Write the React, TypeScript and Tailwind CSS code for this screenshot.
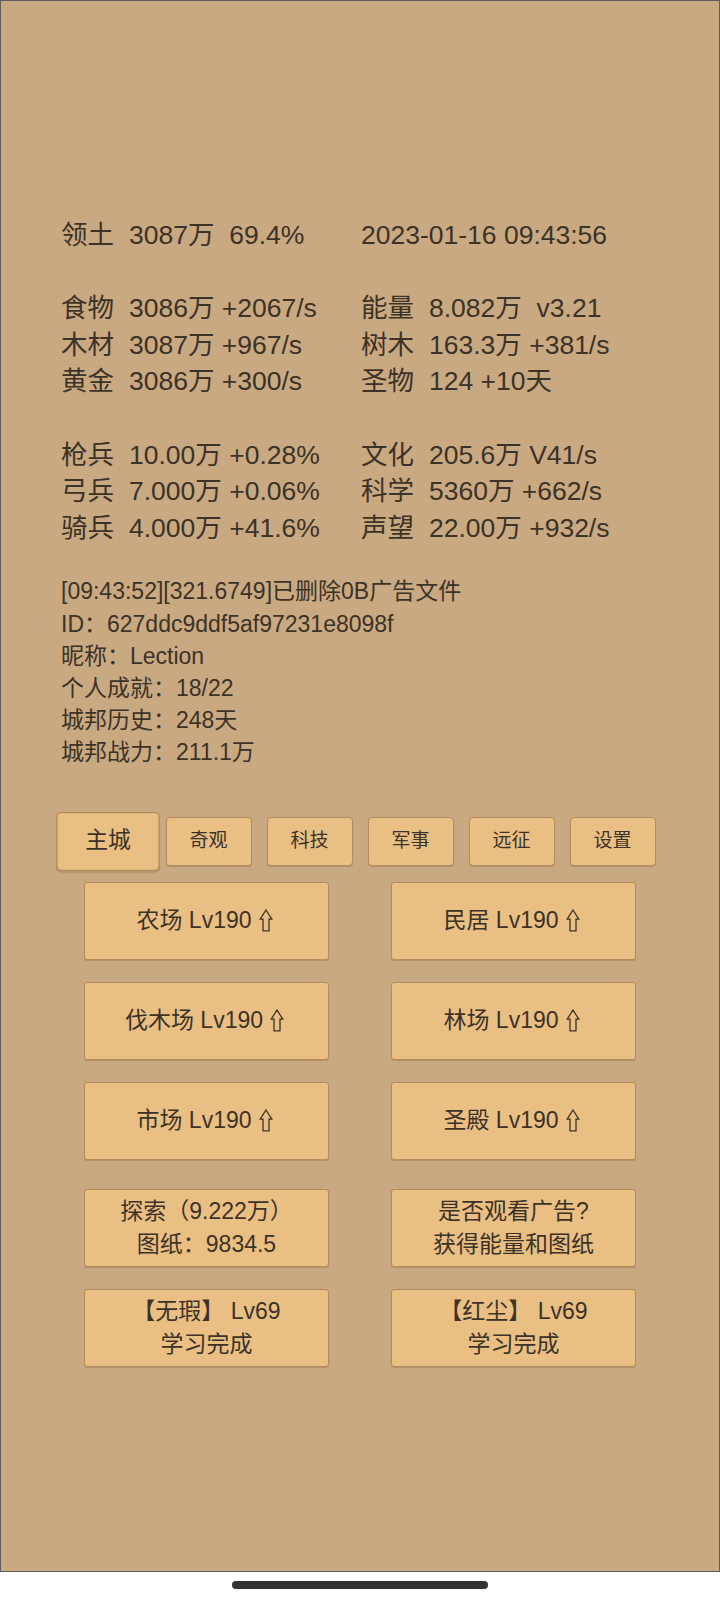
import React from 'react';

const font = { fontFamily: '"Liberation Sans", "Noto Sans CJK SC", sans-serif' };

type Stat = { label: string; value: string };

const statRows: (null | [Stat, Stat])[] = [
    [
        { label: '领土', value: '3087万  69.4%' },
        { label: '', value: '2023-01-16 09:43:56' },
    ],
    null,
    [
        { label: '食物', value: '3086万 +2067/s' },
        { label: '能量', value: '8.082万  v3.21' },
    ],
    [
        { label: '木材', value: '3087万 +967/s' },
        { label: '树木', value: '163.3万 +381/s' },
    ],
    [
        { label: '黄金', value: '3086万 +300/s' },
        { label: '圣物', value: '124 +10天' },
    ],
    null,
    [
        { label: '枪兵', value: '10.00万 +0.28%' },
        { label: '文化', value: '205.6万 V41/s' },
    ],
    [
        { label: '弓兵', value: '7.000万 +0.06%' },
        { label: '科学', value: '5360万 +662/s' },
    ],
    [
        { label: '骑兵', value: '4.000万 +41.6%' },
        { label: '声望', value: '22.00万 +932/s' },
    ],
];

const infoLines = [
    '[09:43:52][321.6749]已删除0B广告文件',
    'ID：627ddc9ddf5af97231e8098f',
    '昵称：Lection',
    '个人成就：18/22',
    '城邦历史：248天',
    '城邦战力：211.1万',
];

const tabs = ['主城', '奇观', '科技', '军事', '远征', '设置'];

const buildings = [
    ['农场', '民居'],
    ['伐木场', '林场'],
    ['市场', '圣殿'],
];

function UpArrow() {
    return (
        <svg width="14" height="23" viewBox="0 0 14 23" className="ml-[7px] shrink-0">
            <path
                d="M7 1 L12.8 10.2 H10 V21.8 H4 V10.2 H1.2 Z"
                fill="none"
                stroke="#3d3226"
                strokeWidth="1.3"
                strokeLinejoin="miter"
            />
        </svg>
    );
}

function StatCell({ stat }: { stat: Stat }) {
    return (
        <div className="flex w-[300px] whitespace-pre">
            {stat.label && <span className="w-[68px] shrink-0">{stat.label}</span>}
            <span>{stat.value}</span>
        </div>
    );
}

function GameButton({ children }: { children: React.ReactNode }) {
    return (
        <button className="flex h-[78px] w-[245px] flex-col items-center justify-center rounded-[3px] border border-[#b48b5d] bg-[#e9bf84] text-[23px] leading-[33px] text-[#3d3226] shadow-[0_1px_1px_rgba(80,50,20,0.2)]">
            {children}
        </button>
    );
}

export default function App() {
    return (
        <div className="h-[1601px] w-[720px] bg-white text-[#3d3226]" style={font}>
            {/* Game panel */}
            <div className="flex h-[1572px] w-[720px] flex-col border border-[#5e5e5e] bg-[#c9a981] pt-[216px]">
                {/* Resource stats */}
                <div className="flex flex-col pl-[60px] text-[26.5px] leading-[36.6px]">
                    {statRows.map((row, i) =>
                        row ? (
                            <div key={i} className="flex">
                                <StatCell stat={row[0]} />
                                <StatCell stat={row[1]} />
                            </div>
                        ) : (
                            <div key={i} className="h-[36.6px]" />
                        )
                    )}
                </div>

                {/* Log + player info */}
                <div className="mt-[29px] flex flex-col pl-[60px] text-[23px] leading-[32.2px]">
                    {infoLines.map((line) => (
                        <div key={line}>{line}</div>
                    ))}
                </div>

                {/* Tabs */}
                <div className="mt-[48px] flex justify-center gap-[15px]">
                    {tabs.map((t, i) => (
                        <button
                            key={t}
                            className={
                                i === 0
                                    ? 'flex h-[49px] w-[86px] scale-[1.2] items-center justify-center rounded-[4px] border border-[#b48b5d] bg-[#e9bf84] text-[19px] text-[#3d3226] shadow-[0_1px_1px_rgba(80,50,20,0.15)]'
                                    : 'flex h-[49px] w-[86px] items-center justify-center rounded-[4px] border border-[#b48b5d] bg-[#e9bf84] text-[19px] text-[#3d3226] shadow-[0_1px_1px_rgba(80,50,20,0.2)]'
                            }
                        >
                            {t}
                        </button>
                    ))}
                </div>

                {/* Buildings */}
                <div className="mt-[16px] flex flex-col gap-[22px]">
                    {buildings.map((pair) => (
                        <div key={pair[0]} className="flex justify-center gap-[62px]">
                            {pair.map((b) => (
                                <GameButton key={b}>
                                    <span className="flex items-center pr-[4px]">
                                        {b} Lv190
                                        <UpArrow />
                                    </span>
                                </GameButton>
                            ))}
                        </div>
                    ))}
                </div>

                {/* Explore / ads / research */}
                <div className="mt-[29px] flex flex-col gap-[22px]">
                    <div className="flex justify-center gap-[62px]">
                        <GameButton>
                            <span>探索（9.222万）</span>
                            <span>图纸：9834.5</span>
                        </GameButton>
                        <GameButton>
                            <span>是否观看广告?</span>
                            <span>获得能量和图纸</span>
                        </GameButton>
                    </div>
                    <div className="flex justify-center gap-[62px]">
                        <GameButton>
                            <span className="whitespace-pre">【无瑕】 Lv69</span>
                            <span>学习完成</span>
                        </GameButton>
                        <GameButton>
                            <span className="whitespace-pre">【红尘】 Lv69</span>
                            <span>学习完成</span>
                        </GameButton>
                    </div>
                </div>
            </div>

            {/* Home indicator */}
            <div className="flex justify-center pt-[9px]">
                <div className="h-[8px] w-[256px] rounded-full bg-[#333333]" />
            </div>
        </div>
    );
}
